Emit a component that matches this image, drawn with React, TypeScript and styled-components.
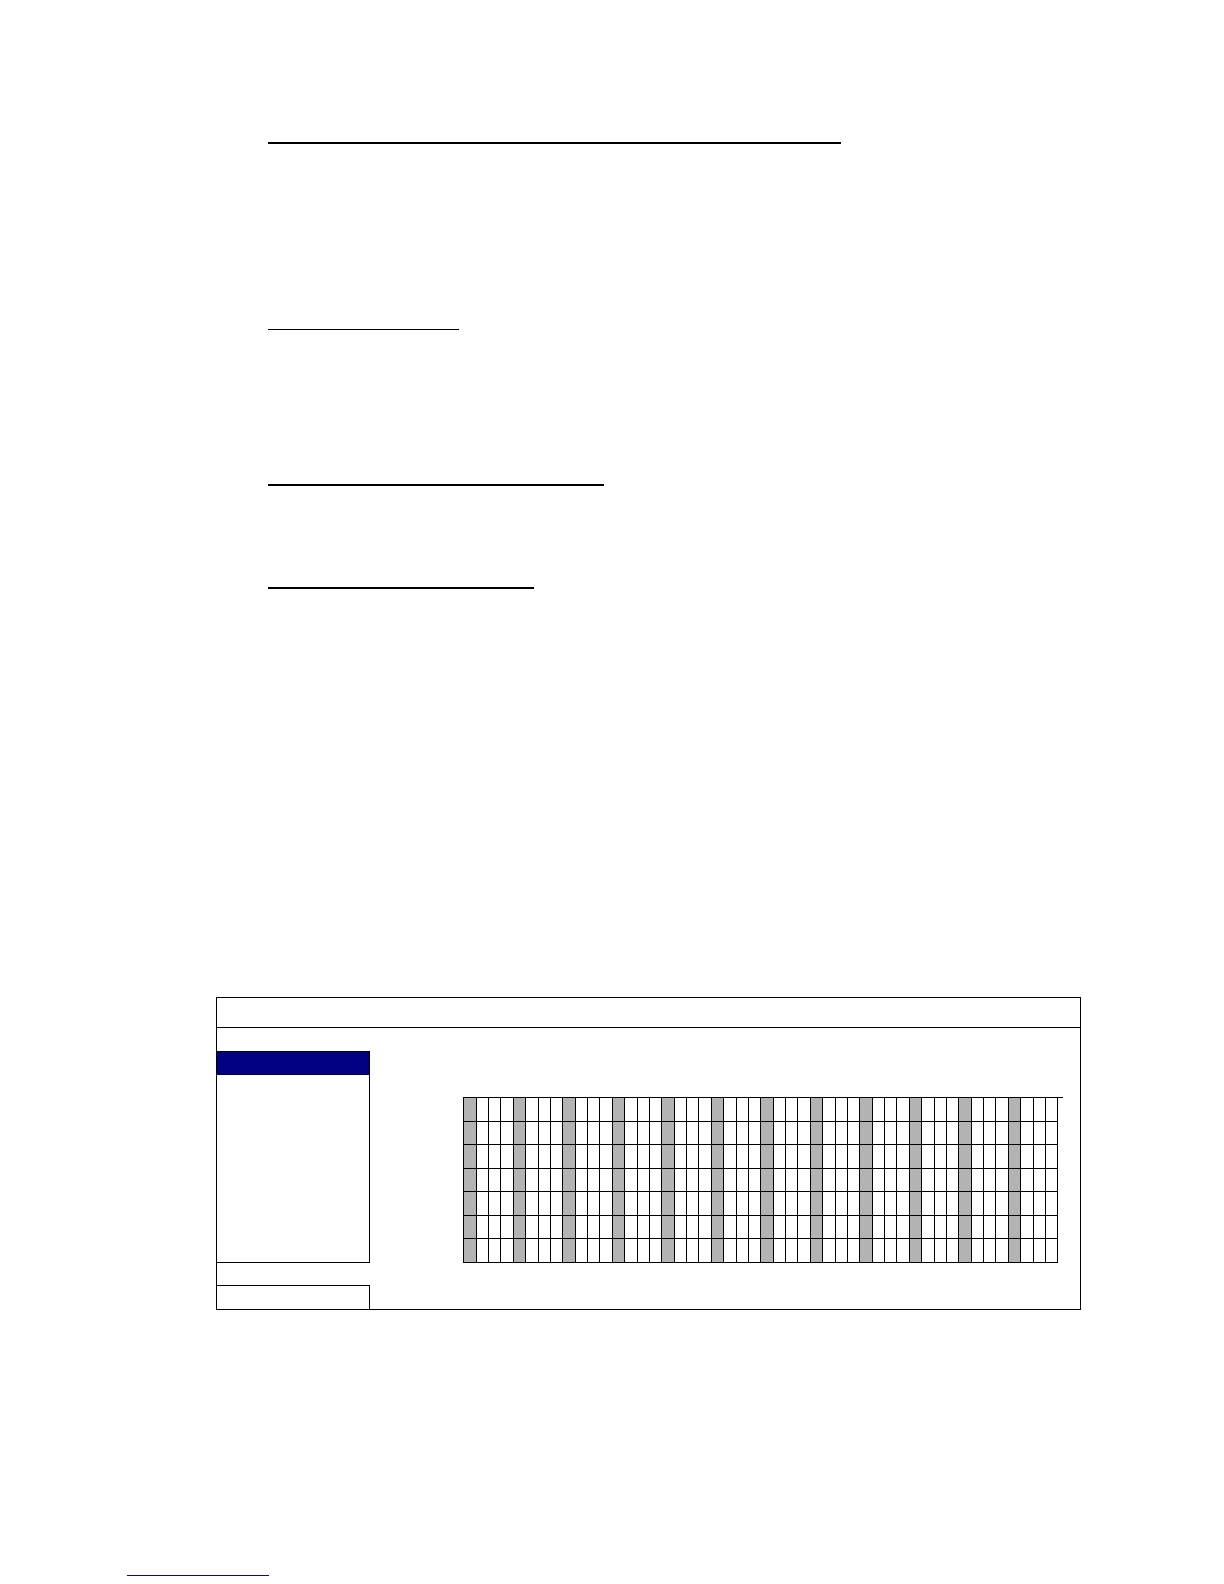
import React from "react";
import styled, { createGlobalStyle } from "styled-components";

const GlobalStyle = createGlobalStyle`
  *, *::before, *::after { box-sizing: border-box; }
  body {
    margin: 0;
    background: #ffffff;
    color: #000000;
    font-family: "Liberation Sans", Arial, sans-serif;
  }
`;

const Page = styled.div`
  display: flex;
  flex-direction: column;
  padding-bottom: 8px;
`;

const Article = styled.main`
  display: flex;
  flex-direction: column;
  padding: 142px 143px 0 216px;
`;

const Outline = styled.section`
  display: flex;
  flex-direction: column;
  padding-left: 52px;
`;

const Rule = styled.hr<{ $length: number; $weight: number; $after: number }>`
  width: 100%;
  max-width: ${(p) => p.$length}px;
  height: ${(p) => p.$weight}px;
  margin: 0 0 ${(p) => p.$after}px;
  border: 0;
  background: #000000;
`;

const Panel = styled.section`
  display: flex;
  flex-direction: column;
  border: 1px solid #000000;
`;

const TitleBar = styled.header`
  height: 30px;
  border-bottom: 1px solid #000000;
`;

const PanelBody = styled.div`
  display: flex;
  padding-top: 23px;
`;

const Sidebar = styled.nav`
  display: flex;
  flex-direction: column;
  gap: 22px;
  flex: 0 0 153px;
`;

const Menu = styled.div`
  border: 1px solid #000000;
  border-left: 0;
`;

const MenuCurrent = styled.div`
  height: 23px;
  background: #000080;
  border-bottom: 1px solid #000040;
`;

const MenuSpace = styled.div`
  height: 187px;
`;

const StatusBox = styled.div`
  height: 24px;
  border-top: 1px solid #000000;
  border-right: 1px solid #000000;
`;

const Schedule = styled.div`
  flex: 1;
  min-width: 0;
  padding: 46px 17px 0 93px;
`;

const TableEdge = styled.div`
  padding-right: 5px;
  border-top: 1px solid #000000;
`;

const Timetable = styled.table`
  width: 100%;
  table-layout: fixed;
  border-spacing: 0;
  border-left: 1px solid #000000;
`;

const Slots = styled.tr<{ $height: number }>`
  height: ${(p) => p.$height}px;
`;

const Slot = styled.td<{ $shaded: boolean }>`
  padding: 0;
  border-right: 1px solid #000000;
  border-bottom: 1px solid #000000;
  background: ${(p) => (p.$shaded ? "#b3b3b3" : "#ffffff")};
`;

const SlotColumn = styled.col<{ $width: number }>`
  width: ${(p) => p.$width}px;
`;

const Footer = styled.footer`
  display: flex;
  padding: 241px 127px 0;
`;

const FooterLink = styled.a`
  width: 142px;
  height: 25px;
  border-bottom: 1px solid #140090;
  text-decoration: none;
`;

const rules = [
  { length: 573, weight: 2, after: 185 },
  { length: 191, weight: 1, after: 154 },
  { length: 336, weight: 2, after: 101 },
  { length: 266, weight: 2, after: 408 },
];

// Eight slot widths repeat across the table.
const slotWidths = [13, 12, 12, 13, 12, 13, 12, 12];
const slots = Array.from({ length: 48 }, (_, i) => i);
const rowHeights = [24, 23, 24, 23, 24, 23, 24];

export default function App() {
  return (
    <Page>
      <GlobalStyle />
      <Article>
        <Outline>
          {rules.map((rule, i) => (
            <Rule key={i} $length={rule.length} $weight={rule.weight} $after={rule.after} />
          ))}
        </Outline>
        <Panel>
          <TitleBar />
          <PanelBody>
            <Sidebar>
              <Menu>
                <MenuCurrent />
                <MenuSpace />
              </Menu>
              <StatusBox />
            </Sidebar>
            <Schedule>
              <TableEdge>
                <Timetable>
                  <colgroup>
                    {slots.map((slot) => (
                      <SlotColumn key={slot} $width={slotWidths[slot % 8]} />
                    ))}
                  </colgroup>
                  <tbody>
                    {rowHeights.map((height, row) => (
                      <Slots key={row} $height={height}>
                        {slots.map((slot) => (
                          <Slot key={slot} $shaded={slot % 4 === 0} />
                        ))}
                      </Slots>
                    ))}
                  </tbody>
                </Timetable>
              </TableEdge>
            </Schedule>
          </PanelBody>
        </Panel>
      </Article>
      <Footer>
        <FooterLink href="#" />
      </Footer>
    </Page>
  );
}
